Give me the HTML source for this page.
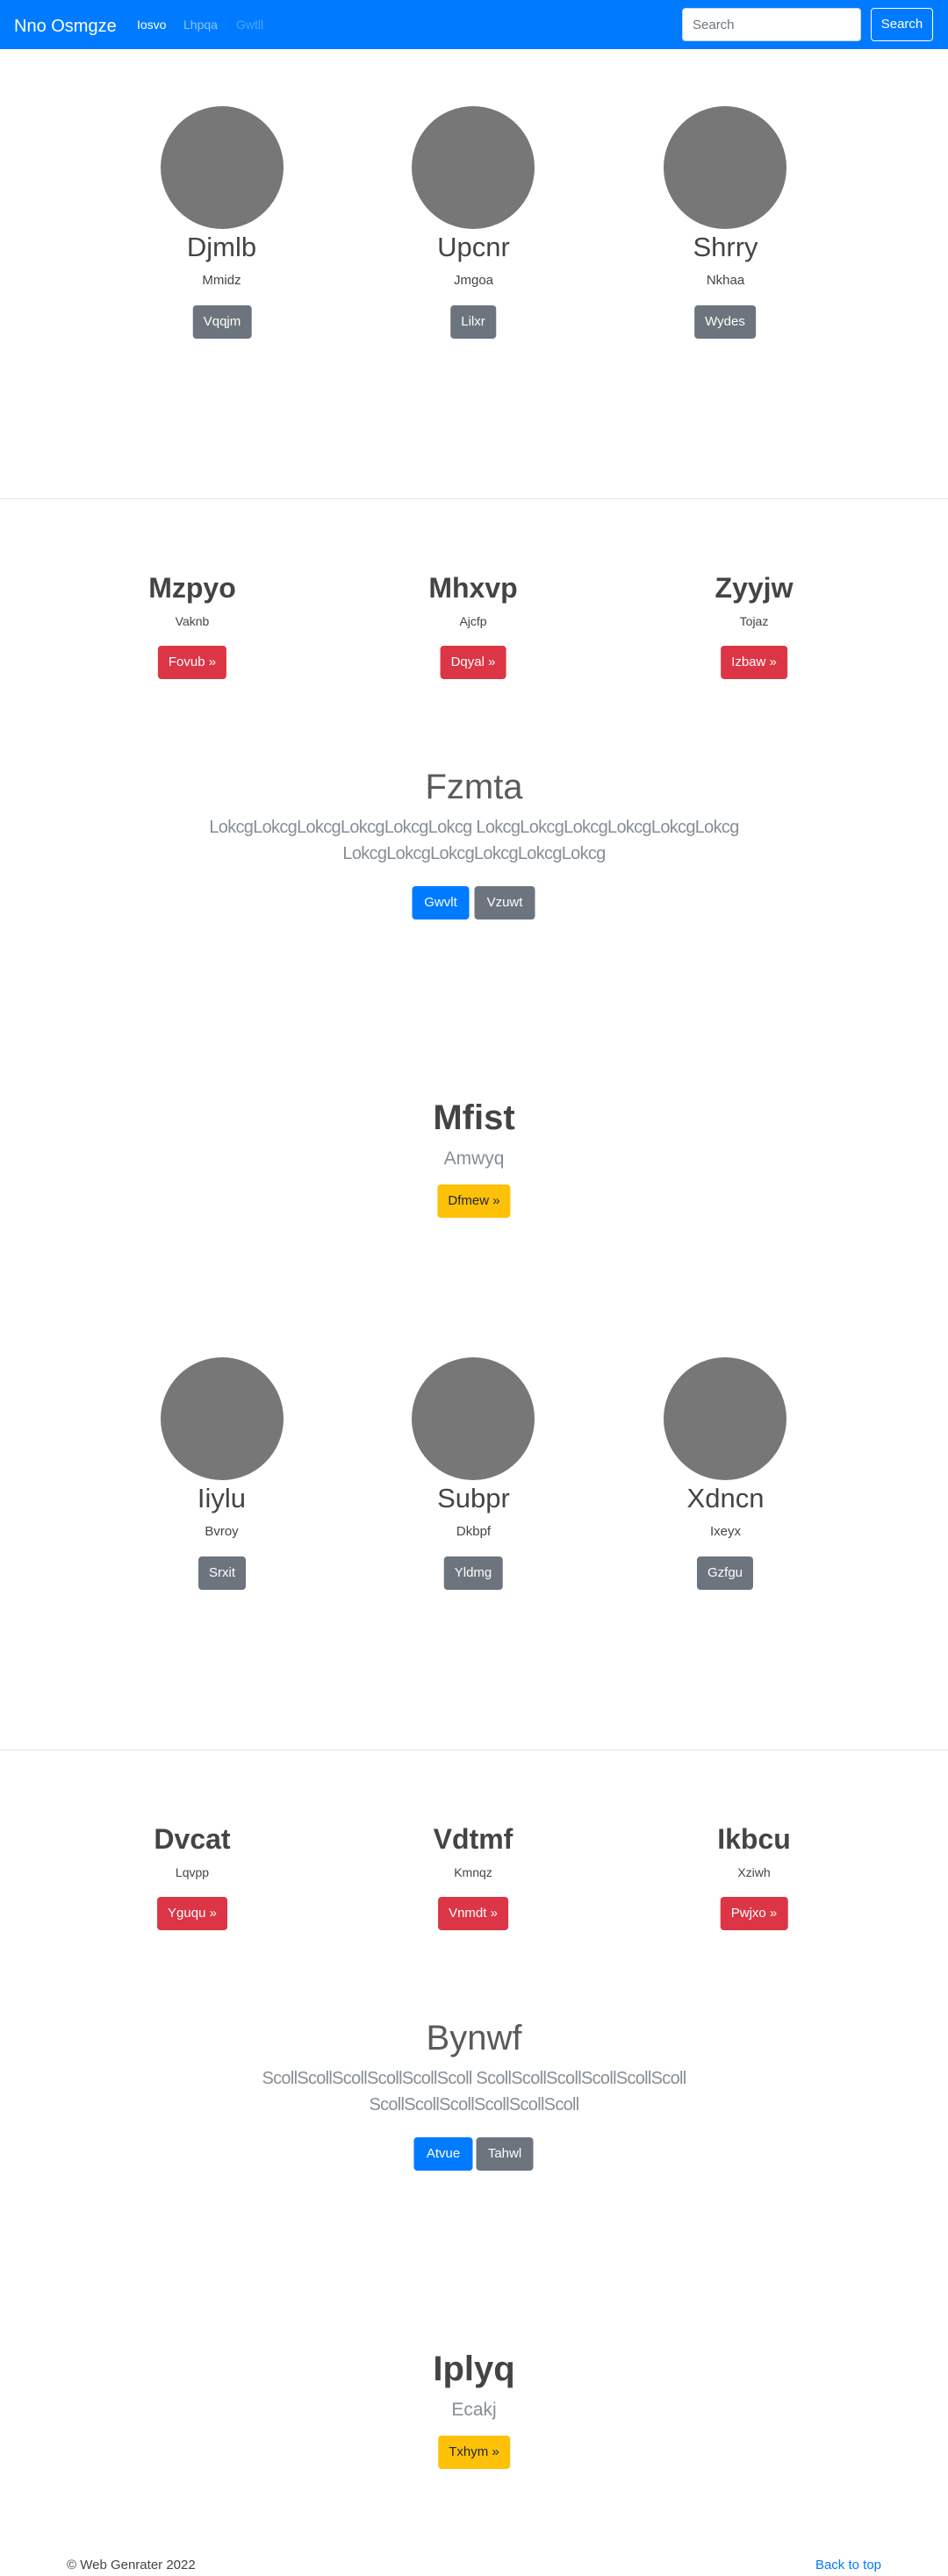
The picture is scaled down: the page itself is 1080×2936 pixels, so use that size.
<!DOCTYPE html>
<html><head><meta charset="utf-8">
<style>
*{box-sizing:border-box;margin:0;padding:0}
body{width:1080px;height:2936px;position:relative;background:#fff;font-family:"Liberation Sans",sans-serif;color:#444;overflow:hidden}
.nav{position:absolute;left:0;top:0;width:1080px;height:56px;background:#007bff}
.a{position:absolute;text-align:center;white-space:nowrap;line-height:1}
.circ{position:absolute;width:140px;height:140px;border-radius:50%;background:#777}
.btn{position:absolute;height:38px;line-height:38px;font-size:15px;color:#fff;border-radius:4px;padding:0 12px;white-space:nowrap;transform:translateX(-50%)}
.g{background:#6c757d}.r{background:#dc3545}.y{background:#ffc107;color:#212529}.b{background:#007bff}
.hr{position:absolute;left:0;width:1080px;height:1px;background:#e5e5e5}
.nm{font-size:31px}
.lead{font-size:20px;line-height:30px;color:#868e96;letter-spacing:-0.7px}
</style></head><body>
<div class="nav">
 <div class="a" style="left:16px;top:20px;font-size:20px;color:#fff">Nno Osmgze</div>
 <div class="a" style="left:156px;top:21px;font-size:14px;color:#fff">Iosvo</div>
 <div class="a" style="left:209px;top:21px;font-size:14px;color:rgba(255,255,255,.55)">Lhpqa</div>
 <div class="a" style="left:269px;top:21px;font-size:14px;color:rgba(255,255,255,.3)">Gwtll</div>
 <div style="position:absolute;left:777px;top:9px;width:204px;height:38px;background:#fff;border-radius:4px;border:1px solid #ced4da"></div>
 <div class="a" style="left:789px;top:21px;font-size:15px;color:#6c757d">Search</div>
 <div style="position:absolute;left:992px;top:9px;width:71px;height:38px;border:1px solid #fff;border-radius:4px;color:#fff;font-size:15px;line-height:36px;text-align:center">Search</div>
</div>

<!-- group 1 -->
<div class="circ" style="left:183px;top:121px"></div>
<div class="circ" style="left:469px;top:121px"></div>
<div class="circ" style="left:756px;top:121px"></div>
<div class="a nm" style="left:109px;width:287px;top:266px">Djmlb</div>
<div class="a nm" style="left:396px;width:287px;top:266px">Upcnr</div>
<div class="a nm" style="left:683px;width:287px;top:266px">Shrry</div>
<div class="a" style="left:109px;width:287px;top:312px;font-size:15px">Mmidz</div>
<div class="a" style="left:396px;width:287px;top:312px;font-size:15px">Jmgoa</div>
<div class="a" style="left:683px;width:287px;top:312px;font-size:15px">Nkhaa</div>
<div class="btn g" style="left:253px;top:348px">Vqqjm</div>
<div class="btn g" style="left:539px;top:348px">Lilxr</div>
<div class="btn g" style="left:826px;top:348px">Wydes</div>
<div class="hr" style="top:568px"></div>
<div class="a" style="left:59px;width:320px;top:654px;font-size:32px;font-weight:bold">Mzpyo</div>
<div class="a" style="left:379px;width:320px;top:654px;font-size:32px;font-weight:bold">Mhxvp</div>
<div class="a" style="left:699px;width:320px;top:654px;font-size:32px;font-weight:bold">Zyyjw</div>
<div class="a" style="left:59px;width:320px;top:701px;font-size:14px">Vaknb</div>
<div class="a" style="left:379px;width:320px;top:701px;font-size:14px">Ajcfp</div>
<div class="a" style="left:699px;width:320px;top:701px;font-size:14px">Tojaz</div>
<div class="btn r" style="left:219px;top:736px">Fovub »</div>
<div class="btn r" style="left:539px;top:736px">Dqyal »</div>
<div class="btn r" style="left:859px;top:736px">Izbaw »</div>
<div class="a" style="left:0;width:1080px;top:877px;font-size:40px;color:#5a5a5a">Fzmta</div>
<div class="a lead" style="left:0;width:1080px;top:928px">LokcgLokcgLokcgLokcgLokcgLokcg LokcgLokcgLokcgLokcgLokcgLokcg<br>LokcgLokcgLokcgLokcgLokcgLokcg</div>
<div class="btn b" style="left:502px;top:1010px;width:65px;text-align:center;padding:0">Gwvlt</div>
<div class="btn g" style="left:575px;top:1010px;width:69px;text-align:center;padding:0">Vzuwt</div>
<div class="a" style="left:0;width:1080px;top:1254px;font-size:40px;font-weight:bold">Mfist</div>
<div class="a" style="left:0;width:1080px;top:1310px;font-size:21px;color:#868e96">Amwyq</div>
<div class="btn y" style="left:540px;top:1350px">Dfmew »</div>

<!-- group 2 -->
<div class="circ" style="left:183px;top:1547px"></div>
<div class="circ" style="left:469px;top:1547px"></div>
<div class="circ" style="left:756px;top:1547px"></div>
<div class="a nm" style="left:109px;width:287px;top:1692px">Iiylu</div>
<div class="a nm" style="left:396px;width:287px;top:1692px">Subpr</div>
<div class="a nm" style="left:683px;width:287px;top:1692px">Xdncn</div>
<div class="a" style="left:109px;width:287px;top:1738px;font-size:15px">Bvroy</div>
<div class="a" style="left:396px;width:287px;top:1738px;font-size:15px">Dkbpf</div>
<div class="a" style="left:683px;width:287px;top:1738px;font-size:15px">Ixeyx</div>
<div class="btn g" style="left:253px;top:1774px">Srxit</div>
<div class="btn g" style="left:539px;top:1774px">Yldmg</div>
<div class="btn g" style="left:826px;top:1774px">Gzfgu</div>
<div class="hr" style="top:1994px"></div>
<div class="a" style="left:59px;width:320px;top:2080px;font-size:32px;font-weight:bold">Dvcat</div>
<div class="a" style="left:379px;width:320px;top:2080px;font-size:32px;font-weight:bold">Vdtmf</div>
<div class="a" style="left:699px;width:320px;top:2080px;font-size:32px;font-weight:bold">Ikbcu</div>
<div class="a" style="left:59px;width:320px;top:2127px;font-size:14px">Lqvpp</div>
<div class="a" style="left:379px;width:320px;top:2127px;font-size:14px">Kmnqz</div>
<div class="a" style="left:699px;width:320px;top:2127px;font-size:14px">Xziwh</div>
<div class="btn r" style="left:219px;top:2162px">Yguqu »</div>
<div class="btn r" style="left:539px;top:2162px">Vnmdt »</div>
<div class="btn r" style="left:859px;top:2162px">Pwjxo »</div>
<div class="a" style="left:0;width:1080px;top:2303px;font-size:40px;color:#5a5a5a">Bynwf</div>
<div class="a lead" style="left:0;width:1080px;top:2354px">ScollScollScollScollScollScoll ScollScollScollScollScollScoll<br>ScollScollScollScollScollScoll</div>
<div class="btn b" style="left:505px;top:2436px;width:67px;text-align:center;padding:0">Atvue</div>
<div class="btn g" style="left:575px;top:2436px;width:65px;text-align:center;padding:0">Tahwl</div>
<div class="a" style="left:0;width:1080px;top:2680px;font-size:40px;font-weight:bold">Iplyq</div>
<div class="a" style="left:0;width:1080px;top:2736px;font-size:21px;color:#868e96">Ecakj</div>
<div class="btn y" style="left:540px;top:2776px">Txhym »</div>

<div class="a" style="left:76px;top:2916px;font-size:15px">© Web Genrater 2022</div>
<div class="a" style="right:76px;top:2916px;font-size:15px;color:#007bff">Back to top</div>
</body></html>
